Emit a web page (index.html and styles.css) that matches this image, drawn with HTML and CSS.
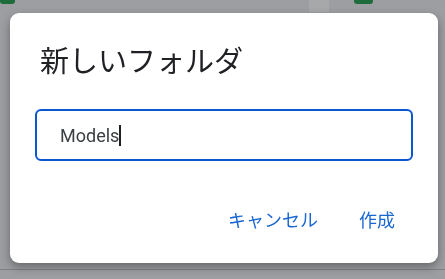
FILE: index.html
```html
<!DOCTYPE html>
<html lang="ja">
<head>
    <meta charset="UTF-8">
    <meta name="viewport" content="width=device-width, initial-scale=1.0">
    <title>新しいフォルダ</title>
    <link rel="stylesheet" href="styles.css">
</head>
<body>
    <div class="backdrop">
        <span class="chip chip-left"></span>
        <span class="chip chip-right"></span>
        <span class="strip"></span>
        <span class="rule"></span>
    </div>

    <div class="dialog">
        <h1 class="dialog-title">新しいフォルダ</h1>

        <div class="field">
            <span class="field-text">Models</span><span class="caret"></span>
        </div>

        <div class="actions">
            <button class="text-button">キャンセル</button>
            <button class="text-button">作成</button>
        </div>
    </div>
</body>
</html>
```

FILE: styles.css
```css
body {
    font-family: Roboto, "Noto Sans CJK JP", sans-serif;
    background-color: #9c9ea1;
    margin: 0;
    padding: 13px 7px 16px 10px;
}

/* dimmed app behind the dialog */
.backdrop {
    position: fixed;
    inset: 0;
    z-index: 0;
}

.chip {
    position: absolute;
    top: 0;
    height: 4px;
    background-color: #1e6b3c;
    border-radius: 0 0 3px 3px;
}

.chip-left {
    left: 0;
    width: 15px;
}

.chip-right {
    left: 354px;
    width: 19px;
}

.strip {
    position: absolute;
    top: 0;
    left: 309px;
    width: 20px;
    height: 12px;
    background-color: #a7a8aa;
}

.rule {
    position: absolute;
    left: 0;
    right: 0;
    top: 269px;
    height: 1px;
    background-color: #7f8184;
}

.dialog {
    position: relative;
    z-index: 1;
    background-color: #ffffff;
    border-radius: 9px;
    box-shadow: 0 4px 10px rgba(0, 0, 0, 0.35);
    padding: 31px 25px 32px 25px;
}

.dialog-title {
    font-size: 29px;
    line-height: 36px;
    font-weight: 400;
    color: #202124;
    margin: 0 0 29px 5px;
}

.field {
    box-sizing: border-box;
    height: 52px;
    border: 2px solid #0b57d0;
    border-radius: 6px;
    padding: 0 23px;
    display: flex;
    align-items: center;
}

.field-text {
    font-size: 18px;
    color: #3c4043;
}

.caret {
    width: 2px;
    height: 21px;
    background-color: #1f1f1f;
}

.actions {
    display: flex;
    justify-content: flex-end;
    gap: 17px;
    margin-top: 50px;
    margin-right: 6px;
}

.text-button {
    font-family: Roboto, "Noto Sans CJK JP", sans-serif;
    font-size: 18px;
    line-height: 20px;
    color: #1a66d2;
    background: none;
    border: none;
    padding: 0 12px;
    cursor: pointer;
}
```
